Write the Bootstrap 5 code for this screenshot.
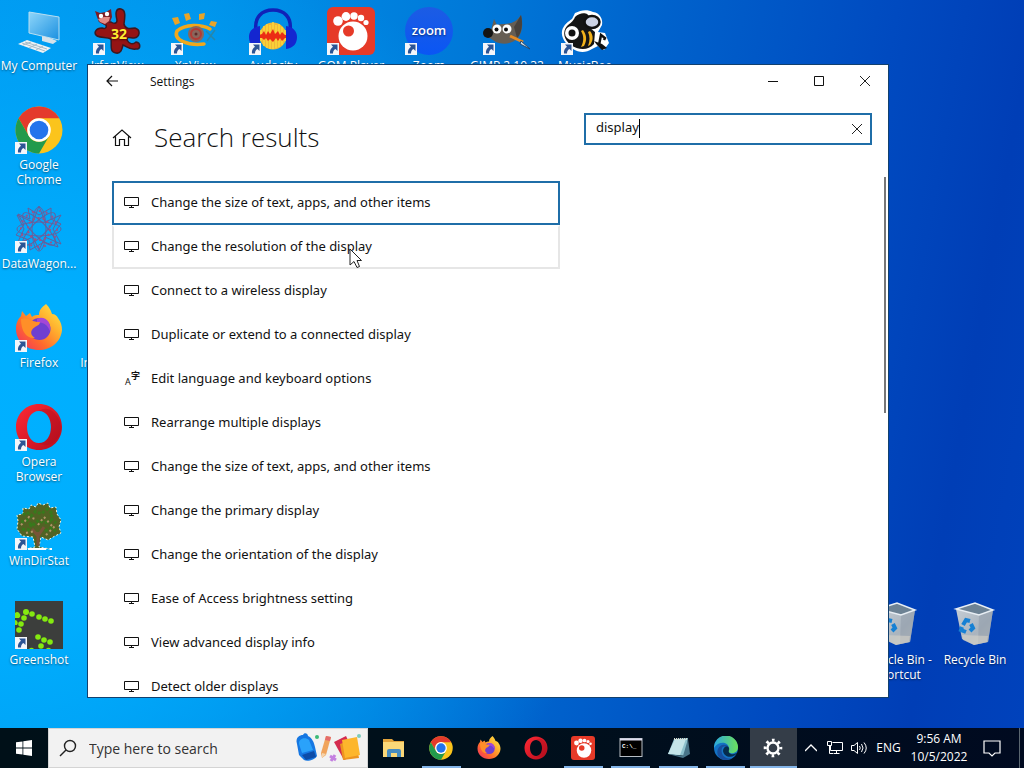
<!DOCTYPE html>
<html lang="en">

<head>
    <meta charset="UTF-8">
    <meta name="viewport" content="width=device-width, initial-scale=1">
    <title>Settings</title>
    <link href="https://cdn.jsdelivr.net/npm/bootstrap@5.3.2/dist/css/bootstrap.min.css" rel="stylesheet">
    <style>
        body {
            font-family: "Open Sans", "Noto Sans", "Noto Sans CJK JP", sans-serif;
            font-size: 14px;
            color: #111;
            background: #0050c8;
        }

        button {
            border: 0;
            padding: 0;
            background: none;
            color: inherit;
        }

        svg {
            display: block;
            flex-shrink: 0;
        }

        /* Desktop */
        .desktop {
            min-height: 0;
            background:
                radial-gradient(ellipse 620px 560px at 0 62%, #00b0ff 0, #00aefe 30%, rgba(0, 164, 248, 0) 100%),
                linear-gradient(100deg, #0096ee 0%, #0090e8 18%, #0078d8 42%, #0062cc 58%, #004ac0 78%, #003eb6 90%, #0042bc 100%);
        }

        .icon-grid {
            grid-template-columns: repeat(auto-fill, 78px);
            grid-auto-rows: 99px;
            padding-top: 7px;
        }

        .desk-icon {
            color: #fff;
            font-size: 12px;
            line-height: 15px;
            text-decoration: none;
            text-align: center;
            text-shadow: 0 1px 2px rgba(0, 0, 0, .5);
            white-space: nowrap;
        }

        .desk-icon svg {
            width: 48px;
            height: 48px;
            margin: 0 auto 3px;
        }

        .col-2nd { grid-column: 2; }
        .col-bin { grid-column: -2; }
        .col-shortcut { grid-column: -3; }
        .row-2 { grid-row: 2; }
        .row-3 { grid-row: 3; }
        .row-4 { grid-row: 4; }
        .row-5 { grid-row: 5; }
        .row-6 { grid-row: 6; }
        .row-7 { grid-row: 7; }

        /* Settings window */
        .app-window {
            top: 64px;
            right: 135px;
            bottom: 30px;
            left: 87px;
            border: 1px solid #12406e;
            background: #fff;
        }

        .title-bar {
            height: 32px;
            font-size: 12px;
        }

        .title-text {
            margin-left: 14px;
            padding-top: 2px;
        }

        .back-btn {
            width: 48px;
        }

        .caption-btn {
            width: 46px;
        }

        .head-row {
            padding: 16px 16px 0 24px;
            height: 84px;
        }

        .head-title {
            margin-left: 22px;
            font-size: 26px;
            font-weight: 300;
            line-height: 48px;
        }

        .search-box {
            width: 288px;
            height: 32px;
            border: 2px solid #1f6ea8;
        }

        .search-box input {
            border: 0;
            outline: 0;
            padding: 0 10px 2px;
            min-width: 0;
            font-family: "Noto Sans", sans-serif;
            font-size: 13px;
            color: #111;
            background: transparent;
        }

        .text-caret {
            left: 53px;
            top: 4px;
            width: 1px;
            height: 19px;
            background: #000;
        }

        .results {
            width: 448px;
            margin-left: 24px;
            font-family: "Noto Sans", sans-serif;
            font-size: 13px;
        }

        .result-item {
            height: 44px;
            padding: 0 10px;
            border: 2px solid transparent;
            color: #111;
            text-decoration: none;
        }

        .result-item.is-focused {
            border-color: #1f6ea8;
        }

        .result-item.is-hovered {
            border-color: #e6e6e6;
            border-top-color: transparent;
        }

        .pointer {
            left: 235px;
            top: 21px;
        }

        .scroll-thumb {
            top: 112px;
            right: 2px;
            width: 2px;
            height: 236px;
            background: #777;
        }

        /* Taskbar */
        .task-bar {
            height: 40px;
            background: linear-gradient(90deg, #001018, #00101c 50%, #000a20);
            color: #fff;
        }

        .start-btn {
            width: 48px;
        }

        .task-search {
            width: 320px;
            background: #f2f2f2;
            border: 1px solid #d4d4d4;
            padding-left: 10px;
            color: #222;
        }

        .task-search input {
            border: 0;
            outline: 0;
            padding: 0;
            min-width: 0;
            background: transparent;
        }

        .task-search input::placeholder {
            color: #333;
            opacity: 1;
        }

        .task-apps {
            width: 427px;
            margin-left: 2px;
        }

        .task-app {
            flex: 1 1 0;
            display: flex;
            align-items: center;
            justify-content: center;
        }

        .task-app.is-open {
            background: linear-gradient(#83b4e8, #83b4e8) bottom / 39px 2px no-repeat;
        }

        .task-app.is-active {
            background: linear-gradient(#83b4e8, #83b4e8) bottom / 100% 2px no-repeat #343d48;
        }

        .tray {
            font-size: 12px;
            line-height: 18px;
            padding-right: 4px;
        }

        .tray button {
            display: flex;
            align-items: center;
            justify-content: center;
        }

        .tray-icon { width: 24px; }
        .tray-lang { width: 35px; }
        .tray-clock { width: 66px; }
        .tray-notes { width: 39px; margin-right: 8px; }
        .tray-peek { width: 1px; border-left: 1px solid #5a6670 !important; }
    </style>
</head>

<body class="vh-100 d-flex flex-column overflow-hidden">

    <!-- shared icons -->
    <svg width="0" height="0" class="position-absolute">
        <defs>
            <linearGradient id="ffBody" x1="1" y1="0" x2="0" y2="1">
                <stop offset="0" stop-color="#fff04a" />
                <stop offset=".35" stop-color="#ffb02e" />
                <stop offset=".65" stop-color="#ff6a2c" />
                <stop offset="1" stop-color="#f0286a" />
            </linearGradient>
            <linearGradient id="opRing" x1="0" y1="0" x2="1" y2="1">
                <stop offset="0" stop-color="#ff2a35" />
                <stop offset="1" stop-color="#b80c1c" />
            </linearGradient>
            <linearGradient id="screenFill" x1="0" y1="0" x2="1" y2="1">
                <stop offset="0" stop-color="#8fd6fa" />
                <stop offset="1" stop-color="#1a90e0" />
            </linearGradient>
            <linearGradient id="zoomFill" x1="0" y1="0" x2="0" y2="1">
                <stop offset="0" stop-color="#1c5ce4" />
                <stop offset="1" stop-color="#0a56f4" />
            </linearGradient>
            <linearGradient id="binFill" x1="0" y1="0" x2="1" y2="1">
                <stop offset="0" stop-color="#c4ccd4" />
                <stop offset=".6" stop-color="#aab4be" />
                <stop offset="1" stop-color="#c8c8c4" />
            </linearGradient>
            <linearGradient id="edgeTop" x1="0" y1="0" x2="1" y2="0">
                <stop offset="0" stop-color="#2aa8e0" />
                <stop offset="1" stop-color="#6ce05a" />
            </linearGradient>
            <symbol id="shortcut" viewBox="0 0 12 12">
                <rect width="12" height="12" fill="#f4f6fa" />
                <path d="M4 1.500h6.500V8L8.500 6C6.500 7 6 8.500 6 10.500H3C2.500 7.500 4 5 6 3.800Z" fill="#2c5494" />
            </symbol>
            <symbol id="chrome" viewBox="0 0 48 48">
                <circle cx="24" cy="24" r="23.500" fill="#fbc41c" />
                <path d="M3.600 12.300A23.500 23.500 0 0 1 44.400 12.300H24A11.700 11.700 0 0 0 13.900 29.900Z" fill="#e43a2c" />
                <path d="M3.600 12.300A23.500 23.500 0 0 0 24 47.500L34.200 29.900A11.700 11.700 0 0 1 13.900 29.900Z" fill="#229a4c" />
                <circle cx="24" cy="24" r="11.800" fill="#fff" />
                <circle cx="24" cy="24" r="9.300" fill="#2474ec" />
            </symbol>
            <symbol id="firefox" viewBox="0 0 48 48">
                <path d="M31 0C35 4 36 7 37 10C40 10 42 12 43 14C46 18 47 22 47 26C46 38 36 46 24 46C11 46 1 37 1 25C1 19 3 15 6 12L7 7L11 12L15 9L17 13C19 11 21 11 24 11C24 6 27 3 31 0Z" fill="url(#ffBody)" />
                <circle cx="24.500" cy="25" r="11" fill="#6f3fd0" />
                <path d="M22 15C29 11 37 18 35 27C32 20 28 18 22 19Z" fill="#a447d6" />
                <path d="M6 15C12 12 16 18 25 18C25 22 19 22 17 26C15 29 17 32 20 34C12 35 6 28 6 15Z" fill="#ff8f28" />
            </symbol>
            <symbol id="opera" viewBox="0 0 48 48">
                <path fill-rule="evenodd" d="M24 1C37 1 47 11 47 24S37 47 24 47S1 37 1 24S11 1 24 1ZM24 8C16 8 12 16 12 24S16 40 24 40S36 32 36 24S32 8 24 8Z" fill="url(#opRing)" />
                <path d="M24 8C31 3 38 7 41 12C48 20 47 31 41 37C37 42 30 44 24 40C32 40 36 32 36 24S32 8 24 8Z" fill="#a50d1c" opacity=".35" />
            </symbol>
            <symbol id="gom" viewBox="0 0 48 48">
                <rect width="48" height="48" rx="6" fill="#e63a28" />
                <circle cx="26" cy="29" r="14.500" fill="#fff" />
                <circle cx="11" cy="14" r="4.800" fill="#fff" />
                <circle cx="19" cy="9.500" r="4.400" fill="#fff" />
                <circle cx="27" cy="9" r="3.700" fill="#fff" />
                <circle cx="34" cy="11" r="3.200" fill="#fff" />
                <circle cx="39" cy="15.500" r="2.600" fill="#fff" />
                <circle cx="21.500" cy="24" r="5.500" fill="#e63a28" />
            </symbol>
            <symbol id="bin" viewBox="0 0 48 48">
                <path d="M5 8L42 9L37 41L23 44L11 38Z" fill="url(#binFill)" />
                <path d="M28 14L42 9L37 41L27 43Z" fill="#929fac" opacity=".6" />
                <path d="M5 8L24 2L42 9L28 14Z" fill="#6d8294" stroke="#e8eef4" stroke-width="1.500" />
                <path d="M11 34L37 35L36 41L23 44L12 39Z" fill="#d6d2c8" opacity=".6" />
                <g fill="none" stroke="#1680d4" stroke-width="4">
                    <path d="M12 24L15 19L19 20" />
                    <path d="M20 23L22 27L19 30" />
                    <path d="M15 31L10 29L11 26" />
                </g>
            </symbol>
            <symbol id="monitor" viewBox="0 0 16 16">
                <path d="M.500 2.500H14.500V10.500H.500ZM7.500 10.500V12.500M5 12.500H10" fill="none" stroke="#111" />
            </symbol>
            <symbol id="cross" viewBox="0 0 10 10">
                <path d="M0 0L10 10M10 0L0 10" fill="none" stroke="#222" />
            </symbol>
        </defs>
    </svg>

    <main class="desktop position-relative flex-grow-1 overflow-hidden">
        <div class="icon-grid d-grid">
            <a href="#" class="desk-icon">
                <svg viewBox="0 0 48 48">
                    <path d="M14 5L44 10V33L14 26Z" fill="url(#screenFill)" stroke="#b8dff2" />
                    <path d="M27 29L35 31L42 34L38 37L27 34Z" fill="#d5e2ea" />
                    <path d="M12 33L36 41L28 46L3 37Z" fill="#eef2f5" />
                    <path d="M10 35L32 42M7 36L30 44M16 35L8 38M22 37L14 41M28 39L21 43" stroke="#a8bcc8" fill="none" />
                </svg>My Computer</a>
            <a href="#" class="desk-icon">
                <svg viewBox="0 0 48 48">
                    <path d="M8 15L18 15C21 17 24 17 24 13C22 6 23 1 28 2C33 3 32 10 31 17C32 22 36 22 42 21C48 23 47 30 41 31C37 31 34 29 34 33C36 37 40 38 43 35C48 36 48 42 43 42C36 43 33 39 30 38C29 42 28 47 23 46C16 45 19 38 18 32C14 30 8 31 4 29C0 26 3 21 9 21C12 22 14 21 13 18Z" fill="#951414" stroke="#3c1820" stroke-width="1.500" />
                    <path d="M2 4L7 6L13 5L18 2L19 10L17 15L12 18L6 15L4 10Z" fill="#7c1c24" />
                    <path d="M5 12L11 10L17 10L16 14L12 17L7 15Z" fill="#e48a84" />
                    <circle cx="8" cy="9" r="2.200" fill="#fff" />
                    <circle cx="14" cy="7" r="2.200" fill="#fff" />
                    <text x="18" y="32" font-size="14" font-weight="700" fill="#ffef30">32</text>
                    <use href="#shortcut" y="36" width="12" height="12" />
                </svg>IrfanView</a>
            <a href="#" class="desk-icon">
                <svg viewBox="0 0 48 48">
                    <path d="M6 24C14 17 30 17 39 22M6 24C2 33 17 39 33 37" fill="none" stroke="#f0a81c" stroke-width="3.500" stroke-linecap="round" />
                    <path d="M1 11L7 10L9 16L4 18ZM13 7L18 6L20 12L15 14ZM28 7L34 6L33 12L28 13ZM40 14L46 15L44 20L38 18Z" fill="#e8a428" />
                    <circle cx="25" cy="27" r="8" fill="#8a665c" />
                    <circle cx="25" cy="27" r="5" fill="none" stroke="#b43a34" stroke-width="2" />
                    <circle cx="25" cy="27" r="1.500" fill="#5c2a2a" />
                    <path d="M35 24L44 33M44 23L36 34" stroke="#2886a8" stroke-width="1.500" />
                    <use href="#shortcut" y="36" width="12" height="12" />
                </svg>XnView</a>
            <a href="#" class="desk-icon">
                <svg viewBox="0 0 48 48">
                    <circle cx="24" cy="29" r="13.500" fill="#f0b838" />
                    <path d="M12 23V34M15 19V39M18 17V41M21 18V42M24 15V42M27 18V41M30 17V40M33 20V38M36 23V34" stroke="#fbd83a" stroke-width="1.500" />
                    <path d="M10 28L13 27L15 24L17 28L19 24L21 27L24 22L26 27L29 24L31 28L33 25L36 28L38 28V31L36 31L33 34L31 31L29 34L27 31L24 35L21 32L19 34L17 31L15 33L13 31H10Z" fill="#ec2c14" />
                    <path d="M7 24C5 10 13 3 24 3S43 10 41 24" fill="none" stroke="#1022b8" stroke-width="3.500" />
                    <path d="M11 19V42C3 41 0 36 0 30S4 20 11 19ZM37 19V42C45 41 48 36 48 30S44 20 37 19Z" fill="#1426d0" />
                    <use href="#shortcut" y="36" width="12" height="12" />
                </svg>Audacity</a>
            <a href="#" class="desk-icon">
                <svg viewBox="0 0 48 48">
                    <use href="#gom" />
                    <use href="#shortcut" y="36" width="12" height="12" />
                </svg>GOM Player</a>
            <a href="#" class="desk-icon">
                <svg viewBox="0 0 48 48">
                    <circle cx="24" cy="24" r="24" fill="url(#zoomFill)" />
                    <text x="24" y="28" font-size="13" font-weight="600" fill="#fff" text-anchor="middle">zoom</text>
                    <use href="#shortcut" y="36" width="12" height="12" />
                </svg>Zoom</a>
            <a href="#" class="desk-icon">
                <svg viewBox="0 0 48 48">
                    <path d="M11 12L14 18C22 15 30 20 38 8C40 16 40 24 35 31C29 37 20 38 13 35L5 30L8 23Z" fill="#665e54" />
                    <path d="M31 20L38 8C40 16 39 26 34 31Z" fill="#47413c" />
                    <circle cx="5" cy="26" r="5" fill="#141414" />
                    <circle cx="14" cy="22" r="4.500" fill="#fff" />
                    <circle cx="24" cy="22" r="4.500" fill="#fff" />
                    <circle cx="13.500" cy="22.500" r="2" fill="#111" />
                    <circle cx="23" cy="22.500" r="2" fill="#111" />
                    <path d="M27 29L40 35" stroke="#e58a24" stroke-width="3" />
                    <path d="M38 34L47 42L37 37Z" fill="#c8d8e4" stroke="#244a70" />
                    <use href="#shortcut" y="36" width="12" height="12" />
                </svg>GIMP 2.10.32</a>
            <a href="#" class="desk-icon">
                <svg viewBox="0 0 48 48">
                    <path d="M14 6C20 3 26 2 32 5C39 6 42 12 41 18L37 25L44 26L48 36L43 43L37 39L31 42C25 46 18 46 12 42C4 37 0 30 1 24C2 18 8 14 11 12Z" fill="#fff" />
                    <path d="M14 10C20 4 28 6 28 10L23 16L34 25L33 37C27 44 17 43 10 38C3 33 1 25 6 19C9 16 12 15 14 10Z" fill="#151515" />
                    <ellipse cx="31" cy="15" rx="7.500" ry="6" fill="#ccd2e4" stroke="#111" stroke-width="2.500" />
                    <circle cx="11" cy="26" r="7" fill="#fff" />
                    <circle cx="11" cy="26" r="3.500" fill="#111" />
                    <path d="M22 23C26 28 26 34 23 39L20 40C23 34 23 29 20 24ZM29 24C33 29 32 34 29 38L27 39C29 34 29 29 27 25Z" fill="#f2b21c" />
                    <path d="M38 38L40 28L44 31L43 33" fill="none" stroke="#111" stroke-width="2.500" />
                    <path d="M33 34L41 37L46 41L41 43L36 38Z" fill="#111" />
                    <use href="#shortcut" y="36" width="12" height="12" />
                </svg>MusicBee</a>

            <a href="#" class="desk-icon row-2">
                <svg viewBox="0 0 48 48">
                    <use href="#chrome" />
                    <use href="#shortcut" y="36" width="12" height="12" />
                </svg>Google<br>Chrome</a>
            <a href="#" class="desk-icon row-3">
                <svg viewBox="0 0 48 48">
                    <g fill="none" stroke="#665f9c">
                        <path d="M24 1L30 17L46 10L38 24L46 39L30 32L24 45L18 32L2 39L9 24L2 10L18 17Z" />
                        <path d="M13 3L24 10L36 3L36 14L46 19L38 29L43 42L29 37L15 45L14 35L1 30L9 20L3 9L15 14Z" />
                        <ellipse cx="24" cy="24" rx="22" ry="7" />
                        <ellipse cx="24" cy="24" rx="7" ry="22" />
                        <ellipse cx="24" cy="24" rx="22" ry="7" transform="rotate(45 24 24)" />
                        <ellipse cx="24" cy="24" rx="22" ry="7" transform="rotate(-45 24 24)" />
                    </g>
                    <circle cx="24" cy="24" r="11" fill="none" stroke="#a84c80" stroke-width="2" stroke-dasharray="2 3" />
                    <circle cx="24" cy="24" r="18" fill="none" stroke="#99528c" stroke-width="2" stroke-dasharray="2 5" />
                    <use href="#shortcut" y="36" width="12" height="12" />
                </svg>DataWagon...</a>
            <a href="#" class="desk-icon row-4">
                <svg viewBox="0 0 48 48">
                    <use href="#firefox" />
                    <use href="#shortcut" y="36" width="12" height="12" />
                </svg>Firefox</a>
            <a href="#" class="desk-icon row-4 col-2nd"><svg></svg>Internet Do...</a>
            <a href="#" class="desk-icon row-5">
                <svg viewBox="0 0 48 48">
                    <use href="#opera" />
                    <use href="#shortcut" y="36" width="12" height="12" />
                </svg>Opera<br>Browser</a>
            <a href="#" class="desk-icon row-6">
                <svg viewBox="0 0 48 48">
                    <path d="M3 19L2 13L8 12L8 6L14 7L16 3L21 5L23 1L28 3L33 1L35 6L41 5L42 12L46 18L44 25L46 31L40 34L33 38L26 35L24 45L35 47H11L20 45L18 35L7 34L2 27Z" fill="#516324" stroke="#f4f4e4" stroke-dasharray="2 2" />
                    <path d="M17 27L23 34L29 25M23 30V44" stroke="#785438" stroke-width="3" fill="none" />
                    <path d="M8 13L12 10L16 14L21 9L26 12L32 7L38 12L35 16L41 21M6 20L12 18L17 24L24 18L29 21L36 19M7 27L13 28L18 20M30 29L36 26L41 29" stroke="#38791c" stroke-width="3" stroke-dasharray="3 2" fill="none" />
                    <path d="M6 23L14 15L20 17M23 23L29 15L37 24M11 31L20 29M31 33L40 24" stroke="#b09468" stroke-width="2" stroke-dasharray="2 3" fill="none" />
                    <path d="M13 47H31M35 47H37" stroke="#fff" stroke-width="2" />
                    <use href="#shortcut" y="36" width="12" height="12" />
                </svg>WinDirStat</a>
            <a href="#" class="desk-icon row-7">
                <svg viewBox="0 0 48 48">
                    <rect width="48" height="48" fill="#3c3e3c" />
                    <g fill="#84ea10">
                        <circle cx="11" cy="11" r="3" />
                        <circle cx="17" cy="13" r="2.800" />
                        <circle cx="24" cy="16" r="2.800" />
                        <circle cx="30" cy="18" r="2.800" />
                        <circle cx="36" cy="20" r="2.800" />
                        <circle cx="9" cy="17" r="2.800" />
                        <circle cx="6" cy="23" r="2.800" />
                        <circle cx="4" cy="29" r="2.800" />
                        <path d="M0 12A3 3 0 0 1 4 17L0 17ZM0 19A3 3 0 0 1 2 24L0 24Z" />
                        <circle cx="23" cy="36" r="2.800" />
                        <circle cx="29" cy="39" r="2.800" />
                        <circle cx="35" cy="41" r="2.800" />
                        <circle cx="26" cy="45" r="2.800" />
                        <path d="M14 48A3 3 0 0 1 19 48ZM31 48A3 3 0 0 1 36 48Z" />
                    </g>
                    <use href="#shortcut" y="36" width="12" height="12" />
                </svg>Greenshot</a>
            <a href="#" class="desk-icon row-7 col-shortcut"><svg><use href="#bin" /></svg>Recycle Bin -<br>Shortcut</a>
            <a href="#" class="desk-icon row-7 col-bin"><svg><use href="#bin" /></svg>Recycle Bin</a>
        </div>

        <section class="app-window position-absolute d-flex flex-column overflow-hidden">
            <div class="title-bar d-flex align-items-stretch flex-shrink-0">
                <button type="button" class="back-btn d-flex align-items-center justify-content-center" aria-label="Back">
                    <svg width="12" height="12" viewBox="0 0 12 12" fill="none" stroke="#111" stroke-width="1.200"><path d="M12 6H1M6 1L1 6L6 11" /></svg>
                </button>
                <span class="title-text align-self-center">Settings</span>
                <div class="d-flex ms-auto">
                    <button type="button" class="caption-btn d-flex align-items-center justify-content-center" aria-label="Minimize">
                        <svg width="10" height="10" viewBox="0 0 10 10"><path d="M0 5.500H10" stroke="#111" /></svg>
                    </button>
                    <button type="button" class="caption-btn d-flex align-items-center justify-content-center" aria-label="Maximize">
                        <svg width="10" height="10" viewBox="0 0 10 10"><path d="M.500 .500H9.500V9.500H.500Z" fill="none" stroke="#111" /></svg>
                    </button>
                    <button type="button" class="caption-btn d-flex align-items-center justify-content-center" aria-label="Close">
                        <svg width="10" height="10"><use href="#cross" /></svg>
                    </button>
                </div>
            </div>

            <div class="head-row d-flex align-items-start flex-shrink-0">
                <a href="#" class="align-self-start pt-3" aria-label="Home">
                    <svg width="20" height="18" viewBox="0 0 20 18" fill="none" stroke="#111" stroke-width="1.200"><path d="M1 9L10 1L19 9M3.500 7.500V16.500H7.500V10.500H12.500V16.500H16.500V7.500" /></svg>
                </a>
                <h1 class="head-title mb-0">Search results</h1>
                <div class="search-box position-relative d-flex align-items-center ms-auto">
                    <input type="text" class="flex-grow-1" value="display" aria-label="Find a setting">
                    <span class="text-caret position-absolute"></span>
                    <button type="button" class="pe-2" aria-label="Clear"><svg width="10" height="10"><use href="#cross" /></svg></button>
                </div>
            </div>

            <div class="results d-flex flex-column">
                <a href="#" class="result-item is-focused d-flex align-items-center gap-2 flex-shrink-0"><svg width="19" height="16"><use href="#monitor" width="16" height="16" /></svg>Change the size of text, apps, and other items</a>
                <a href="#" class="result-item is-hovered position-relative d-flex align-items-center gap-2 flex-shrink-0"><svg width="19" height="16"><use href="#monitor" width="16" height="16" /></svg>Change the resolution of the display
                    <svg class="pointer position-absolute" width="14" height="21" viewBox="0 0 14 21"><path d="M1 1V17L5 13.500L8 19.500L10.500 18.500L8 12.500H12.500Z" fill="#fff" stroke="#222" /></svg>
                </a>
                <a href="#" class="result-item d-flex align-items-center gap-2 flex-shrink-0"><svg width="19" height="16"><use href="#monitor" width="16" height="16" /></svg>Connect to a wireless display</a>
                <a href="#" class="result-item d-flex align-items-center gap-2 flex-shrink-0"><svg width="19" height="16"><use href="#monitor" width="16" height="16" /></svg>Duplicate or extend to a connected display</a>
                <a href="#" class="result-item d-flex align-items-center gap-2 flex-shrink-0">
                    <svg width="19" height="24" fill="#111" class="overflow-visible"><text x="1" y="18" font-size="9">A</text><text x="7" y="12" font-size="9" font-weight="700" font-family="Noto Sans CJK JP">字</text></svg>Edit language and keyboard options</a>
                <a href="#" class="result-item d-flex align-items-center gap-2 flex-shrink-0"><svg width="19" height="16"><use href="#monitor" width="16" height="16" /></svg>Rearrange multiple displays</a>
                <a href="#" class="result-item d-flex align-items-center gap-2 flex-shrink-0"><svg width="19" height="16"><use href="#monitor" width="16" height="16" /></svg>Change the size of text, apps, and other items</a>
                <a href="#" class="result-item d-flex align-items-center gap-2 flex-shrink-0"><svg width="19" height="16"><use href="#monitor" width="16" height="16" /></svg>Change the primary display</a>
                <a href="#" class="result-item d-flex align-items-center gap-2 flex-shrink-0"><svg width="19" height="16"><use href="#monitor" width="16" height="16" /></svg>Change the orientation of the display</a>
                <a href="#" class="result-item d-flex align-items-center gap-2 flex-shrink-0"><svg width="19" height="16"><use href="#monitor" width="16" height="16" /></svg>Ease of Access brightness setting</a>
                <a href="#" class="result-item d-flex align-items-center gap-2 flex-shrink-0"><svg width="19" height="16"><use href="#monitor" width="16" height="16" /></svg>View advanced display info</a>
                <a href="#" class="result-item d-flex align-items-center gap-2 flex-shrink-0"><svg width="19" height="16"><use href="#monitor" width="16" height="16" /></svg>Detect older displays</a>
            </div>
            <div class="scroll-thumb position-absolute"></div>
        </section>
    </main>

    <footer class="task-bar d-flex align-items-stretch flex-shrink-0">
        <button type="button" class="start-btn d-flex align-items-center justify-content-center" aria-label="Start">
            <svg width="16" height="16" viewBox="0 0 16 16" fill="#fff"><path d="M0 2.300L6.500 1.400V7.600H0ZM7.300 1.300L16 0V7.600H7.300ZM0 8.400H6.500V14.600L0 13.700ZM7.300 8.400H16V16L7.300 14.700Z" /></svg>
        </button>
        <label class="task-search d-flex align-items-center">
            <svg width="18" height="18" viewBox="0 0 18 18" fill="none" stroke="#222" stroke-width="1.400"><circle cx="11" cy="7" r="5.500" /><path d="M7 11L1 17" /></svg>
            <input type="text" class="flex-grow-1 ms-2 ps-1" placeholder="Type here to search">
            <svg width="72" height="34" viewBox="0 0 72 34">
                <path d="M2 13C0 6 5 4 8 4C9 1 13 2 13 5C17 7 19 11 20 16L22 25C20 29 12 31 9 29L4 24Z" fill="#1677e2" />
                <path d="M4 13C3 8 10 5 14 9L18 19L7 22Z" fill="#2aa2fa" />
                <path d="M7 24L19 20L21 26L11 29Z" fill="#0c4ca8" />
                <circle cx="22" cy="6" r="2" fill="#3cba78" />
                <path d="M31 5L36 6L31 24L27 27L26 22Z" fill="#f0a45c" />
                <path d="M31 5L36 6L35 10L30 9Z" fill="#e46c6c" />
                <path d="M27 22L31 23L27 27Z" fill="#f4d4ac" />
                <path d="M35 25L41 29M40 24L36 30" stroke="#c480e0" stroke-width="3" />
                <path d="M39 11L51 5L60 24L49 29Z" fill="#d42c50" />
                <path d="M45 13L48 29L64 27L60 8Z" fill="#ed9420" />
                <path d="M47 9L62 6L65 24L50 27Z" fill="#fdb62c" />
                <circle cx="64" cy="5" r="2" fill="#7cccbc" />
            </svg>
        </label>

        <div class="task-apps d-flex align-items-stretch">
            <button type="button" class="task-app" aria-label="File Explorer">
                <svg width="24" height="24" viewBox="0 0 24 24"><path d="M1 3H10L12 5H22V20H1Z" fill="#e3a43c" /><path d="M1 6H22V21H1Z" fill="#fbd878" /><path d="M5 21V15Q5 13 7 13H17Q19 13 19 15V21H15V17H9V21Z" fill="#478cc0" /></svg>
            </button>
            <button type="button" class="task-app is-open" aria-label="Chrome"><svg width="24" height="24"><use href="#chrome" /></svg></button>
            <button type="button" class="task-app" aria-label="Firefox"><svg width="24" height="24"><use href="#firefox" /></svg></button>
            <button type="button" class="task-app" aria-label="Opera"><svg width="24" height="24"><use href="#opera" /></svg></button>
            <button type="button" class="task-app is-open" aria-label="GOM Player"><svg width="24" height="24"><use href="#gom" /></svg></button>
            <button type="button" class="task-app is-open" aria-label="Command Prompt">
                <svg width="24" height="24" viewBox="0 0 24 24"><rect x="1" y="2.500" width="22" height="18" fill="#000" stroke="#b8bec4" /><path d="M1 3.500H23" stroke="#dde" stroke-width="2" /><text x="3" y="12" font-family="Liberation Mono" font-size="6" font-weight="700" fill="#fff">C:\_</text></svg>
            </button>
            <button type="button" class="task-app is-open" aria-label="Notepad">
                <svg width="24" height="24" viewBox="0 0 24 24"><path d="M8 3L22 2L20 20L2 18Z" fill="#8cc0cc" /><path d="M9 3L20 3L14 19L2 18Z" fill="#c4e4e8" /><path d="M22 3L24 18L17 22L2 18L17 20Z" fill="#487488" /><path d="M8 3H21" stroke="#d8dcd4" stroke-width="2" stroke-dasharray="1 1" /></svg>
            </button>
            <button type="button" class="task-app is-open" aria-label="Edge">
                <svg width="24" height="24" viewBox="0 0 24 24"><circle cx="12" cy="12" r="12" fill="#1372c4" /><path d="M0 12A12 12 0 0 1 24 11C24 16 20 18 16 17C13 16 15 14 15 12C14 5 4 5 0 12Z" fill="url(#edgeTop)" /><path d="M8 12C6 18 11 24 18 22C15 24 12 24 10 24C1 22 2 11 8 9C11 8 14 9 15 12C12 10 9 10 8 12Z" fill="#174e9c" /><path d="M15 12C16 14 13 16 17 18C20 19 22 17 24 16C20 23 10 22 9 15C9 11 13 9 15 12Z" fill="#00101c" opacity=".7" /></svg>
            </button>
            <button type="button" class="task-app is-active" aria-label="Settings">
                <svg width="20" height="20" viewBox="0 0 20 20" fill="none" stroke="#fff"><circle cx="10" cy="10" r="5.500" stroke-width="2.400" /><circle cx="10" cy="10" r="7.800" stroke-width="3" stroke-dasharray="2.600 3.526" stroke-dashoffset="1.300" /></svg>
            </button>
        </div>

        <div class="tray d-flex align-items-stretch ms-auto">
            <button type="button" class="tray-icon" aria-label="Show hidden icons"><svg width="12" height="8" viewBox="0 0 12 8" fill="none" stroke="#fff" stroke-width="1.300"><path d="M0 7L6 1L12 7" /></svg></button>
            <button type="button" class="tray-icon" aria-label="Network"><svg width="16" height="16" viewBox="0 0 16 16" fill="none" stroke="#fff"><path d="M5.500 2.500H15.500V10.500H3.500V6M.500 1.500H4.500V5.500H.500ZM2.500 5.500V13.500H6M9.500 10.500V13.500M6.500 13.500H12.500" /></svg></button>
            <button type="button" class="tray-icon" aria-label="Volume"><svg width="17" height="14" viewBox="0 0 17 14" fill="none" stroke="#fff"><path d="M.500 4.500H3L6.500 1.500V12.500L3 9.500H.500ZM8.500 5Q10 7 8.500 9M10.500 3Q13.500 7 10.500 11M13 1.500Q17.500 7 13 12.500" /></svg></button>
            <button type="button" class="tray-lang">ENG</button>
            <button type="button" class="tray-clock">9:56 AM<br>10/5/2022</button>
            <button type="button" class="tray-notes" aria-label="Notifications"><svg width="18" height="17" viewBox="0 0 18 17" fill="none" stroke="#fff" stroke-width="1.200"><path d="M1 1H17V13H12L9 16L6 13H1Z" /></svg></button>
            <button type="button" class="tray-peek" aria-label="Show desktop"></button>
        </div>
    </footer>

    <script src="https://cdn.jsdelivr.net/npm/bootstrap@5.3.2/dist/js/bootstrap.bundle.min.js"></script>
</body>

</html>
